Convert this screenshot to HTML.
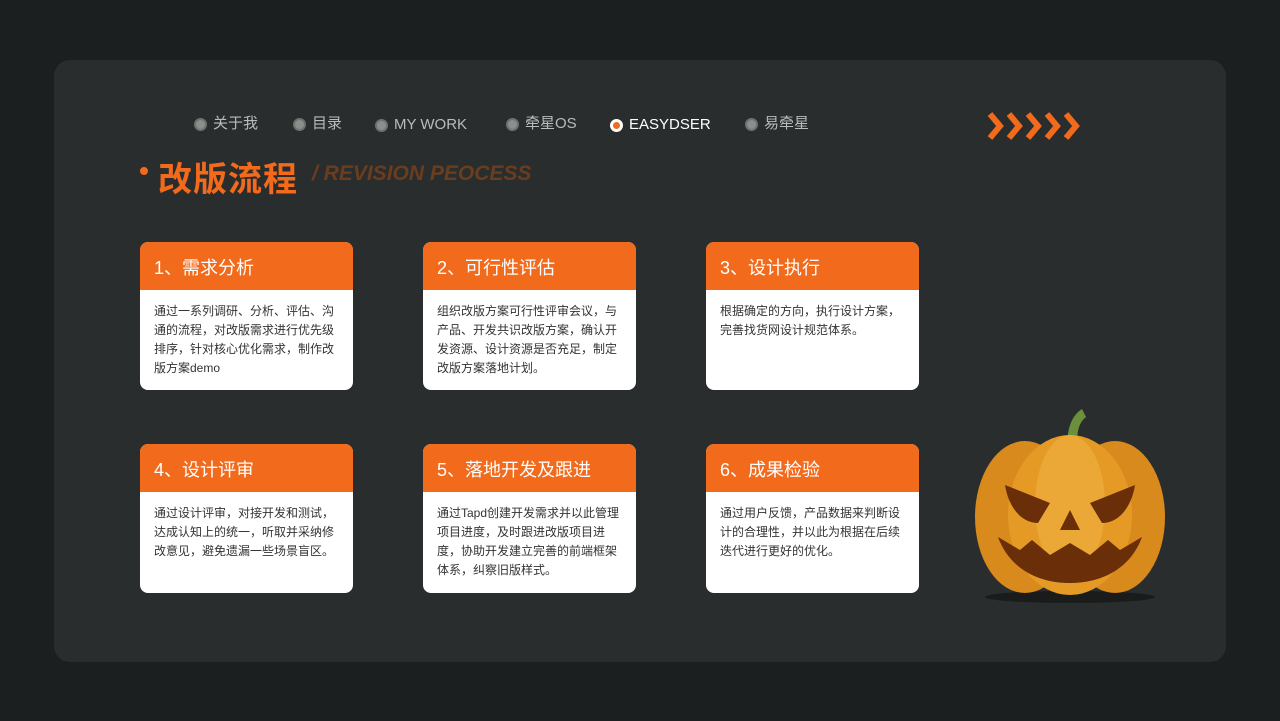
<!DOCTYPE html>
<html><head><meta charset="utf-8"><style>
*{margin:0;padding:0;box-sizing:border-box}
body{width:1280px;height:721px;background:#1c1f20;position:relative;overflow:hidden;font-family:"Liberation Sans","Noto Sans CJK SC",sans-serif}
.panel{position:absolute;left:54px;top:60px;width:1172px;height:602px;background:#2a2d2d;border-radius:16px}
.nav{position:absolute;top:114px;font-size:15px;color:#b8bcbb;display:flex;align-items:center;height:20px;line-height:20px}
.nav span{display:inline-block;line-height:20px}
.nav i{display:inline-block;width:13px;height:13px;border-radius:50%;background:#8a8f8c;border:2px solid #6e7370;margin-right:6px}
.nav.on{color:#fff}.nav.on i{background:#f26a1b;border:3px solid #fff}
.title{position:absolute;left:158px;top:152px;font-size:34px;font-weight:bold;color:#f26a1b;letter-spacing:1px}
.sub{position:absolute;left:312px;top:162px;font-size:21px;font-weight:bold;font-style:italic;color:#6b3d1f}
.card{position:absolute;width:213px;background:#fff;border-radius:8px;overflow:hidden}
.card h3{background:#f26a1b;color:#fff;font-size:18px;font-weight:normal;height:48px;line-height:52px;padding-left:14px}
.card p{font-size:12px;color:#333;line-height:19px;padding:12px 14px 0 14px}
</style></head><body>
<div class="panel"></div>
<div class="nav" style="left:194px"><i></i><span>关于我</span></div>
<div class="nav" style="left:293px"><i></i><span>目录</span></div>
<div class="nav" style="left:375px;top:115px"><i></i><span>MY WORK</span></div>
<div class="nav" style="left:506px"><i></i><span>牵星OS</span></div>
<div class="nav on" style="left:610px;top:115px"><i></i><span>EASYDSER</span></div>
<div class="nav" style="left:745px"><i></i><span>易牵星</span></div>
<svg style="position:absolute;left:986px;top:112px" width="100" height="28">
<g fill="none" stroke="#f26a1b" stroke-width="6" stroke-linejoin="miter"><polyline points="4,2 14,14 4,26"/><polyline points="23,2 33,14 23,26"/><polyline points="42,2 52,14 42,26"/><polyline points="61,2 71,14 61,26"/><polyline points="80,2 90,14 80,26"/></g></svg>
<div style="position:absolute;left:140px;top:167px;width:8px;height:8px;border-radius:50%;background:#f26a1b"></div>
<div class="title">改版流程</div>
<div class="sub">/ REVISION PEOCESS</div>
<div class="card" style="left:140px;top:242px;height:148px"><h3>1、需求分析</h3><p>通过一系列调研、分析、评估、沟通的流程，对改版需求进行优先级排序，针对核心优化需求，制作改版方案demo</p></div>
<div class="card" style="left:423px;top:242px;height:148px"><h3>2、可行性评估</h3><p>组织改版方案可行性评审会议，与产品、开发共识改版方案，确认开发资源、设计资源是否充足，制定改版方案落地计划。</p></div>
<div class="card" style="left:706px;top:242px;height:148px"><h3>3、设计执行</h3><p>根据确定的方向，执行设计方案，完善找货网设计规范体系。</p></div>
<div class="card" style="left:140px;top:444px;height:149px"><h3>4、设计评审</h3><p>通过设计评审，对接开发和测试，达成认知上的统一，听取并采纳修改意见，避免遗漏一些场景盲区。</p></div>
<div class="card" style="left:423px;top:444px;height:149px"><h3>5、落地开发及跟进</h3><p>通过Tapd创建开发需求并以此管理项目进度，及时跟进改版项目进度，协助开发建立完善的前端框架体系，纠察旧版样式。</p></div>
<div class="card" style="left:706px;top:444px;height:149px"><h3>6、成果检验</h3><p>通过用户反馈，产品数据来判断设计的合理性，并以此为根据在后续迭代进行更好的优化。</p></div>
<svg style="position:absolute;left:970px;top:405px" width="200" height="200">
<ellipse cx="100" cy="192" rx="85" ry="6" fill="#1a1c1c"/>
<path d="M98 42 C96 25 102 10 112 4 L116 12 C108 18 106 30 108 44Z" fill="#6b8f3a"/>
<ellipse cx="55" cy="112" rx="50" ry="76" fill="#d88a1c"/>
<ellipse cx="145" cy="112" rx="50" ry="76" fill="#d88a1c"/>
<ellipse cx="100" cy="110" rx="62" ry="80" fill="#e49a25"/>
<ellipse cx="100" cy="100" rx="35" ry="70" fill="#eca836"/>
<path d="M35 80 L80 98 L68 118 C50 118 38 100 35 80Z" fill="#6a2e08"/>
<path d="M165 80 L120 98 L132 118 C150 118 162 100 165 80Z" fill="#6a2e08"/>
<path d="M100 105 L110 125 L90 125Z" fill="#6a2e08"/>
<path d="M28 132 L50 145 L62 135 L80 150 L100 138 L120 150 L138 135 L150 145 L172 132 C160 165 130 178 100 178 C70 178 40 165 28 132Z" fill="#6a2e08"/>
</svg>
</body></html>
